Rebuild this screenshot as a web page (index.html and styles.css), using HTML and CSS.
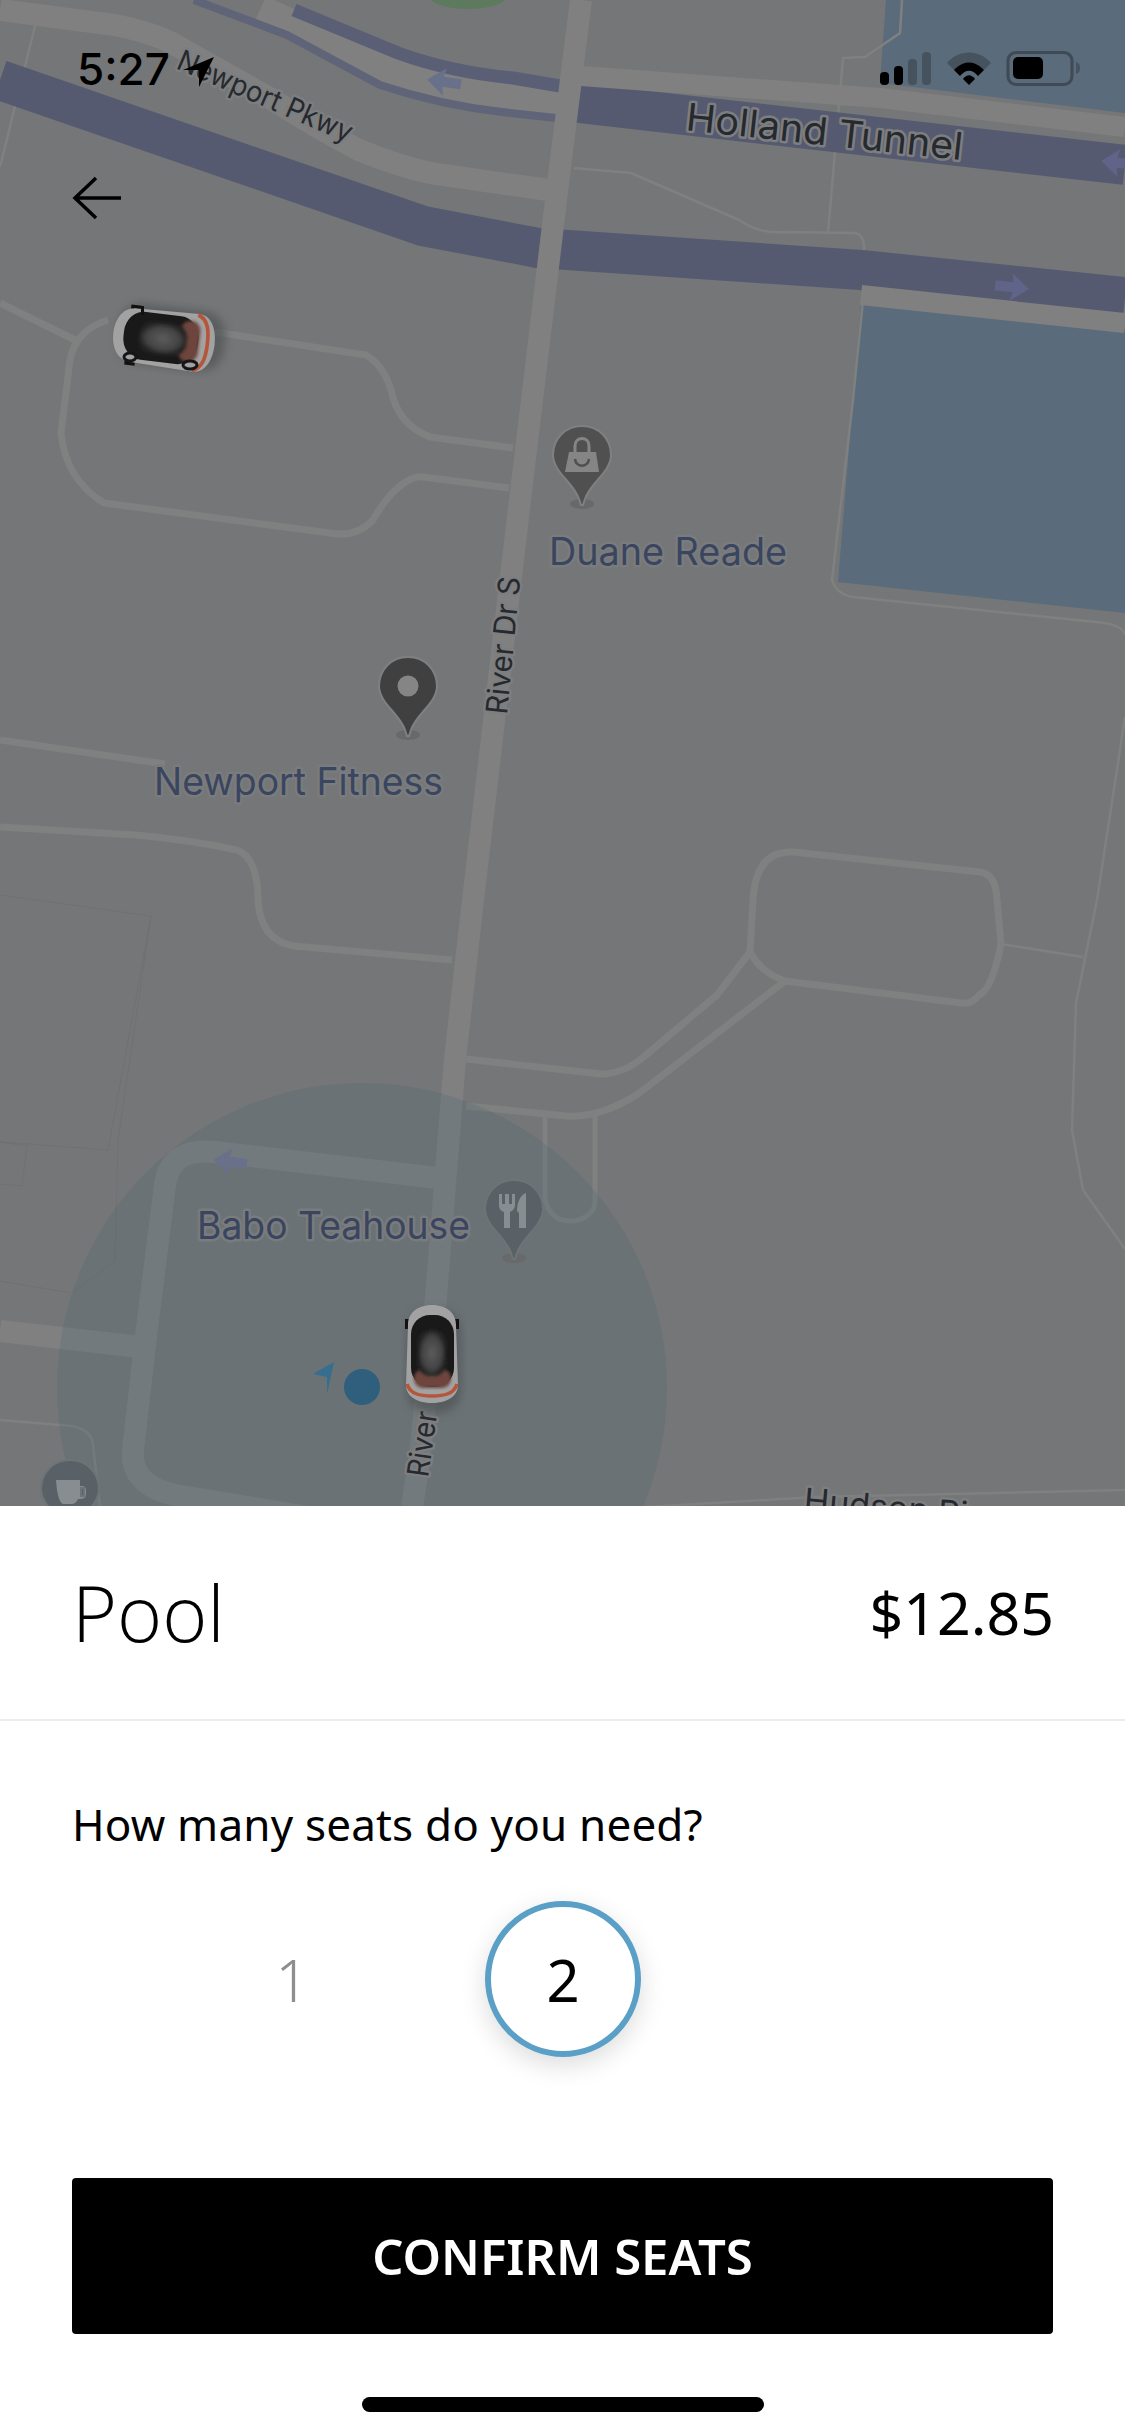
FILE: index.html
```html
<!DOCTYPE html>
<html>
<head lang="en">
    <meta charset="UTF-8">
    <title>Pool</title>
    <link rel="stylesheet" href="styles.css">
</head>
<body>
<div id="map">
    <svg class="map-svg" width="1125" height="1506" viewBox="0 0 1125 1506">
        <defs>
            <path id="pin" d="M0 -29C17 -29 29 -16 29 0C29 17 8 28 3 44L1 50L-1 50L-3 44C-8 28 -29 17 -29 0C-29 -16 -17 -29 0 -29Z"/>
            <path id="arrow" d="M-18 0L0 -14L-2 -5L16 -5L16 5L-2 5L0 14Z"/>
            <radialGradient id="roof">
                <stop offset="0" stop-color="#5c5c5c"/>
                <stop offset="0.7" stop-color="#434343"/>
                <stop offset="1" stop-color="#222"/>
            </radialGradient>
            <filter id="soft"><feGaussianBlur stdDeviation="1.5"/></filter>
            <filter id="softer"><feGaussianBlur stdDeviation="4"/></filter>
            <g id="car">
                <rect class="car-shadow" x="-25" y="-46" width="54" height="104" rx="22" filter="url(#softer)"/>
                <path class="car-mirror" d="M-27 -36h4v10h-4zM23 -36h4v10h-4z"/>
                <path class="car-body" d="M-24 -30C-24 -44 -12 -50 0 -50C12 -50 24 -44 24 -30L26 30C26 42 14 48 0 48C-14 48 -26 42 -26 30Z"/>
                <rect class="car-glass" x="-21" y="-40" width="43" height="72" rx="19"/>
                <rect class="car-rear" x="-18" y="14" width="37" height="19" rx="9" filter="url(#soft)"/>
                <rect x="-14" y="-25" width="28" height="46" rx="12" fill="url(#roof)" filter="url(#soft)"/>
                <path class="car-red" d="M-25 29C-22 39 -12 41 0 41C12 41 22 39 25 29"/>
            </g>
        </defs>

        <ellipse class="park" cx="468" cy="-5" rx="40" ry="14"/>
        <polygon class="water" points="886,0 1125,0 1125,113 880,83"/>
        <polygon class="water" points="861,302 1125,330 1125,613 838,582"/>

        <!-- side streets -->
        <path class="street" d="M0 303L79 342"/>
        <path class="street" d="M215 332L366 355Q384 366 391 390Q398 425 430 437L513 448"/>
        <path class="street" d="M108 320Q76 330 70 360L61 433Q66 480 104 503L330 533Q356 538 373 520Q390 490 409 480Q416 476 423 477L509 488"/>
        <path class="street" d="M0 740L165 764"/>
        <path class="street" d="M0 827L136 835Q190 840 237 850Q258 858 258 900Q260 940 294 946L452 960"/>
        <path class="street" d="M750 952L753 900Q756 850 793 852L980 872Q996 874 997 900L1001 944Q992 990 979 995Q972 1005 961 1003L785 981Q760 972 750 952"/>
        <path class="street" d="M750 952L717 995L646 1055Q620 1078 592 1073L466 1059"/>
        <path class="street" d="M785 981L638 1094Q600 1118 567 1116L466 1106"/>
        <path class="street-sm" d="M545 1116V1198C547 1212 556 1221 570 1221C584 1221 595 1212 595 1202V1114"/>
        <polyline class="line" points="1001,944 1083,957"/>
        <polyline class="line" points="1125,717 1097,900 1076,1003 1072,1130 1083,1190 1125,1249"/>
        <path class="line" d="M574 168L631 173L739 220Q760 234 782 232L854 233Q864 234 864 248L864 290L853 400L832 580Q836 594 853 597L1105 623Q1122 626 1125 634"/>
        <polyline class="line" points="902,0 900,33 865,57 843,58 828,233"/>
        <polyline class="line" points="36,22 0,167"/>
        <path class="line" d="M0 1420L72 1426Q92 1430 93 1445L100 1507"/>
        <polyline class="line" points="646,1507 815,1497 1125,1490"/>
        <polyline class="outline" points="0,895 151,916 108,1150 0,1142"/>
        <polyline class="outline" points="0,1142 27,1146 22,1186 0,1184"/>
        <polyline class="outline" points="151,916 118,1140 115,1261 72,1293 0,1281"/>

        <!-- highways -->
        <path class="road-pkwy" d="M0 10L115 25Q150 32 172 43L273 100Q320 130 359 150Q395 165 430 173L548 190"/>
        <path class="road-wide" d="M260 10L389 69Q450 90 507 95L560 104"/>
        <path class="tunnel-thin" d="M294 10L398 53Q450 72 513 78L560 86"/>
        <path class="tunnel-line" d="M194 0L287 35L380 85Q440 105 502 112L556 118"/>
        <polyline class="tunnel" points="0,80 423,226 538,248 861,270 1125,297"/>
        <polyline class="tunnel" points="570,102 1125,165"/>
        <polyline class="road-edge" points="581,76 880,98 1125,127"/>
        <polyline class="road-edge" points="861,295 1125,323"/>
        <polyline class="road-main" points="581,0 560,167 520,500 473,900 455,1059 436,1297 420,1455 412,1507"/>
        <path class="road-low" d="M438 1178L215 1152Q170 1147 165 1185L146 1336L133 1450Q130 1485 175 1495L416 1535"/>
        <polyline class="road-low" points="0,1331 140,1347"/>

        <circle class="radius" cx="362" cy="1388" r="305"/>

        <use class="arrow-a" href="#arrow" transform="translate(445,82) rotate(8)"/>
        <use class="arrow-a" href="#arrow" transform="translate(231,1162) rotate(8)"/>
        <use class="arrow-b" href="#arrow" transform="translate(1011,287) rotate(186)"/>
        <use class="arrow-b" href="#arrow" transform="translate(1119,163) rotate(6)"/>

        <!-- pins -->
        <g transform="translate(582,455)">
            <ellipse class="pin-foot" cx="0" cy="49" rx="12" ry="5"/>
            <use class="pin-shop" href="#pin"/>
            <path class="pin-icon" d="M-13 -3H14L17 17H-17Z"/>
            <path class="pin-handle" d="M-7 -3V-9C-7 -19 7 -19 7 -9V-3"/>
            <path class="pin-smile" d="M-7 4C-6 13 6 13 7 4"/>
        </g>
        <g transform="translate(408,686)">
            <ellipse class="pin-foot" cx="0" cy="49" rx="12" ry="5"/>
            <use class="pin-place" href="#pin"/>
            <circle class="pin-icon" cx="0" cy="0" r="10.5"/>
        </g>
        <g transform="translate(514,1209)">
            <ellipse class="pin-foot" cx="0" cy="49" rx="12" ry="5"/>
            <use class="pin-food" href="#pin"/>
            <path class="pin-fork" d="M-15 -15H-12V-5H-9V-15H-5V-5H-2V-15H1V-4C1 0 -2 2 -4 3V19H-10V3C-13 2 -15 0 -15 -4Z"/>
            <path class="pin-fork" d="M12 -16V19H5V4L3 2C3 -6 6 -14 12 -16Z"/>
        </g>
        <g transform="translate(70,1489)">
            <use class="pin-food" href="#pin"/>
            <path class="pin-fork" d="M-14 -9H10V-3C15 -3 16 -2 16 2V5C16 9 14 10 8 10C6 14 4 15 2 15H-7C-11 13 -13 5 -14 -9Z"/>
            <path class="pin-fork" d="M-15 18H9V24H-15Z"/>
            <rect class="pin-food" x="11" y="-1" width="3" height="8"/>
        </g>

        <!-- labels -->
        <text class="label-road" transform="translate(685,130) rotate(6.2)" font-size="38" textLength="278" lengthAdjust="spacingAndGlyphs">Holland Tunnel</text>
        <text class="label-road" transform="translate(175,68) rotate(23.5)" font-size="29" textLength="188" lengthAdjust="spacingAndGlyphs">Newport Pkwy</text>
        <text class="label-road" transform="translate(507,715) rotate(-84.5)" font-size="30" textLength="138" lengthAdjust="spacingAndGlyphs">River Dr S</text>
        <text class="label-road" transform="translate(428,1478) rotate(-82)" font-size="30" textLength="66" lengthAdjust="spacingAndGlyphs">River</text>
        <text class="label-road" transform="translate(803,1512) rotate(5)" font-size="34">Hudson River</text>
        <text class="label-poi" x="549" y="565" font-size="38" textLength="238" lengthAdjust="spacingAndGlyphs">Duane Reade</text>
        <text class="label-poi" x="154" y="795" font-size="38" textLength="289" lengthAdjust="spacingAndGlyphs">Newport Fitness</text>
        <text class="label-poi" x="197" y="1239" font-size="38" textLength="273" lengthAdjust="spacingAndGlyphs">Babo Teahouse</text>

        <!-- user dot -->
        <polygon class="dot-arrow" points="313,1374 334,1362 327,1394 327,1377"/>
        <circle class="dot" cx="362" cy="1387" r="18"/>

        <!-- cars -->
        <use href="#car" transform="translate(432,1355)"/>
        <g>
            <use href="#car" transform="translate(165,339) rotate(-83) scale(1.12,1.04)"/>
            <path class="car-mirror" d="M141 306h3v9h-3z"/>
            <ellipse class="wheel" cx="130" cy="357" rx="6" ry="4"/>
            <ellipse class="wheel" cx="190" cy="365" rx="7" ry="4"/>
        </g>
    </svg>

    <div class="status">
        <div class="status-left">
            <span class="time">5:27</span>
            <svg width="34" height="34" viewBox="0 0 34 34">
                <polygon points="3,15 34,2 19,32 19,15"/>
            </svg>
        </div>
        <svg class="status-icons" width="204" height="38" viewBox="0 0 204 38">
            <rect x="0" y="21" width="9" height="13" rx="4"/>
            <rect x="14" y="15" width="9" height="19" rx="4"/>
            <rect class="dim" x="28" y="8" width="9" height="26" rx="4"/>
            <rect class="dim" x="42" y="1" width="9" height="33" rx="4"/>
            <path class="dim" d="M67 12C79 -2 99 -2 111 12L104 19C95 9 83 9 74 19Z"/>
            <path d="M74 19C83 9 95 9 104 19L98 25C92 18 86 18 80 25Z"/>
            <path d="M83 28C87 23 91 23 95 28L89 34Z"/>
            <rect class="batt" x="128" y="1.500" width="64" height="32" rx="8"/>
            <rect x="133" y="6" width="30" height="22" rx="5"/>
            <path class="dim" d="M196 11C199 12 200 14 200 17C200 20 199 22 196 23Z"/>
        </svg>
    </div>

    <svg class="back" width="60" height="50" viewBox="0 0 60 50">
        <path d="M50 23H4M25 3L4 23L25 43"/>
    </svg>
</div>

<div id="sheet">
    <div class="head">
        <span class="title">Pool</span>
        <span class="price">$12.85</span>
    </div>
    <div class="body">
        <p class="question">How many seats do you need?</p>
        <ul class="seats">
            <li>1</li>
            <li class="selected">2</li>
        </ul>
        <div class="confirm">CONFIRM SEATS</div>
        <div class="home-bar"></div>
    </div>
</div>
</body>
</html>
```

FILE: styles.css
```css
*{
    margin: 0;
    padding: 0;
    box-sizing: border-box;
}
ul{
    list-style: none;
}
body{
    width: 1125px;
    height: 2436px;
    overflow: hidden;
    background: #fff;
    color: #000;
    font-family: "Noto Sans", "Open Sans", sans-serif;
}

/* map */
#map{
    position: relative;
    height: 1506px;
    background: #757677;
    overflow: hidden;
}
.map-svg{
    display: block;
}
.map-svg polyline, .street, .street-sm, .line, .road-pkwy, .road-wide, .road-low, .tunnel-thin, .tunnel-line{
    fill: none;
    stroke-linejoin: round;
}
.park{ fill: #5d7a5f; }
.water{ fill: #5a6b7b; }
.street{ stroke: #7f8080; stroke-width: 7; }
.street-sm{ stroke: #7f8080; stroke-width: 5; }
.line{ stroke: #7f8080; stroke-width: 2.500; }
.outline{ stroke: #707172; stroke-width: 1; }
.road-pkwy{ stroke: #808081; stroke-width: 22; }
.road-wide{ stroke: #808081; stroke-width: 30; }
.road-edge{ stroke: #808081; stroke-width: 20; }
.road-main{ stroke: #808081; stroke-width: 22; }
.road-low{ stroke: #808081; stroke-width: 22; }
.tunnel{ stroke: #555a70; stroke-width: 40; }
.tunnel-thin{ stroke: #5a5f76; stroke-width: 13; }
.tunnel-line{ stroke: #5f6479; stroke-width: 8; }
.radius{ fill: #3f6670; fill-opacity: 0.2; }
.arrow-a{ fill: #687189; }
.arrow-b{ fill: #5f6488; }

.pin-foot{ fill: #68696a; }
.pin-shop, .pin-place, .pin-food{ stroke: #7f8081; stroke-width: 2; }
.pin-shop{ fill: #505051; }
.pin-place{ fill: #404041; }
.pin-food{ fill: #596166; stroke: #6d7478; }
.pin-icon{ fill: #858586; }
.pin-fork{ fill: #878d90; }
.pin-handle{ fill: none; stroke: #858586; stroke-width: 3; }
.pin-smile{ fill: none; stroke: #505051; stroke-width: 2.500; }

.label-road, .label-poi{
    font-family: Inter, "Liberation Sans", sans-serif;
    paint-order: stroke;
    stroke-width: 5;
    stroke-linejoin: round;
}
.label-road{
    fill: #26292e;
    stroke: #7d7e7f;
}
.label-poi{
    fill: #3a4560;
    stroke: #7a7b7c;
}

.dot{ fill: #2f5f7d; }
.dot-arrow{ fill: #366e8d; }
.car-shadow{ fill: #4a4d50; opacity: 0.6; }
.car-body{ fill: #a2a2a2; }
.car-glass{ fill: #191919; }
.car-mirror{ fill: #111; }
.car-red{ fill: none; stroke: #b5553a; stroke-width: 3.500; }
.car-rear{ fill: #6d453c; }
.wheel{ fill: #a2a2a2; stroke: #161616; stroke-width: 3; }

/* status bar */
.status{
    position: absolute;
    top: 51px;
    left: 77px;
    right: 41px;
    display: flex;
    justify-content: space-between;
    align-items: flex-start;
}
.status-left{
    display: flex;
    align-items: flex-start;
    gap: 10px;
}
.status-left svg{
    margin-top: 4px;
}
.time{
    font-family: Inter, "Liberation Sans", sans-serif;
    font-size: 44px;
    font-weight: 500;
    line-height: 36px;
}
.status-icons .dim{
    fill: #434e59;
    fill-opacity: 0.85;
}
.status-icons .batt{
    fill: none;
    stroke: #3f4a55;
    stroke-width: 3;
}
.back{
    position: absolute;
    left: 71px;
    top: 175px;
}
.back path{
    fill: none;
    stroke: #000;
    stroke-width: 3.500;
}

/* bottom sheet */
#sheet{
    height: 930px;
    background: #fff;
}
.head{
    height: 215px;
    padding: 0 71px 0 72px;
    border-bottom: 2px solid #ececec;
    display: flex;
    justify-content: space-between;
    align-items: center;
}
.title{
    font-family: "Open Sans", sans-serif;
    font-size: 77px;
    font-weight: 300;
    line-height: 1;
}
.price{
    font-size: 59px;
    line-height: 1;
}
.body{
    padding: 0 72px;
    display: flex;
    flex-direction: column;
}
.question{
    margin-top: 73px;
    font-size: 44px;
    line-height: 60px;
    letter-spacing: 0.18px;
}
.seats{
    margin-top: 47px;
    display: flex;
    padding-left: 142px;
    gap: 115px;
}
.seats li{
    width: 156px;
    height: 156px;
    border-radius: 50%;
    display: flex;
    align-items: center;
    justify-content: center;
    font-size: 58px;
    font-weight: 300;
    color: #8e8e8e;
}
.seats li.selected{
    border: 6px solid #5a9fc6;
    color: #000;
    font-weight: 400;
    box-shadow: 0 8px 26px rgba(0,0,0,0.14);
}
.confirm{
    margin-top: 121px;
    height: 156px;
    background: #000;
    color: #fff;
    border-radius: 4px;
    font-size: 49px;
    font-weight: 600;
    display: flex;
    align-items: center;
    justify-content: center;
}
.home-bar{
    width: 402px;
    height: 15px;
    margin: 63px auto 0;
    border-radius: 8px;
    background: #000;
}
```
